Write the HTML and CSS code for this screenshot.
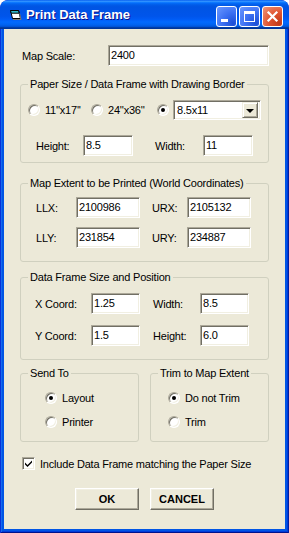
FILE: index.html
```html
<!DOCTYPE html>
<html>
<head>
<meta charset="utf-8">
<link rel="stylesheet" href="styles.css">
</head>
<body>
<div class="window">
  <div class="titlebar">
    <svg class="app-icon" width="13" height="12" viewBox="0 0 13 12">
      <path d="M1.5 1.5 L9.5 1.5 L11.5 9.5 L3.5 9.5 Z" fill="#fff" stroke="#000" stroke-width="1"/>
      <path d="M1.5 1.5 L9.5 1.5 L10.2 4.2 L2.2 4.2 Z" fill="#2fb7c8" stroke="#000" stroke-width="1"/>
      <path d="M4 10.5 L12 10.5 L10.6 4.5" fill="none" stroke="#7a7a7a" stroke-width="1"/>
    </svg>
    <span class="title">Print Data Frame</span>
    <div class="tb-buttons">
      <div class="tb-btn tb-min"><span class="min-glyph"></span></div>
      <div class="tb-btn tb-max"><span class="max-glyph"></span></div>
      <div class="tb-btn tb-close">
        <svg width="13" height="13" viewBox="0 0 13 13"><path d="M2.5 2.5 L10.5 10.5 M10.5 2.5 L2.5 10.5" stroke="#fff" stroke-width="2.2" stroke-linecap="square"/></svg>
      </div>
    </div>
  </div>
  <div class="frame">
    <div class="client">
      <div class="row scale-row">
        <span class="lbl w-scale">Map Scale:</span>
        <div class="input w-scale-in">2400</div>
      </div>

      <div class="group g1">
        <span class="legend">Paper Size / Data Frame with Drawing Border</span>
        <div class="row paper-row">
          <div class="opt opt1"><span class="radio"></span><span class="opt-text">11''x17''</span></div>
          <div class="opt opt2"><span class="radio"></span><span class="opt-text">24''x36''</span></div>
          <span class="radio checked"></span>
          <div class="select">
            <span class="select-text">8.5x11</span>
            <span class="drop-btn"><span class="arrow"></span></span>
          </div>
        </div>
        <div class="row hw-row">
          <span class="lbl w-h">Height:</span>
          <div class="input w50">8.5</div>
          <span class="lbl w-w">Width:</span>
          <div class="input w50">11</div>
        </div>
      </div>

      <div class="group g2">
        <span class="legend">Map Extent to be Printed (World Coordinates)</span>
        <div class="row ext-row r1">
          <span class="lbl w-llx">LLX:</span>
          <div class="input w64">2100986</div>
          <span class="lbl w-urx">URX:</span>
          <div class="input w64">2105132</div>
        </div>
        <div class="row ext-row r2">
          <span class="lbl w-llx">LLY:</span>
          <div class="input w64">231854</div>
          <span class="lbl w-urx">URY:</span>
          <div class="input w64">234887</div>
        </div>
      </div>

      <div class="group g3">
        <span class="legend">Data Frame Size and Position</span>
        <div class="row df-row r1">
          <span class="lbl w-xc">X Coord:</span>
          <div class="input w49">1.25</div>
          <span class="lbl w-dw">Width:</span>
          <div class="input w49">8.5</div>
        </div>
        <div class="row df-row r2">
          <span class="lbl w-xc">Y Coord:</span>
          <div class="input w49">1.5</div>
          <span class="lbl w-dw">Height:</span>
          <div class="input w49">6.0</div>
        </div>
      </div>

      <div class="pair">
        <div class="group g4">
          <span class="legend">Send To</span>
          <div class="row ropt first"><span class="radio checked"></span><span class="opt-text">Layout</span></div>
          <div class="row ropt second"><span class="radio"></span><span class="opt-text">Printer</span></div>
        </div>
        <div class="group g5">
          <span class="legend">Trim to Map Extent</span>
          <div class="row ropt first"><span class="radio checked"></span><span class="opt-text">Do not Trim</span></div>
          <div class="row ropt second"><span class="radio"></span><span class="opt-text">Trim</span></div>
        </div>
      </div>

      <div class="row check-row">
        <span class="checkbox">
          <svg width="9" height="9" viewBox="0 0 9 9"><path d="M1 3.5 L3.5 6 L8 1.5 L8 3.5 L3.5 8 L1 5.5 Z" fill="#000"/></svg>
        </span>
        <span class="opt-text">Include Data Frame matching the Paper Size</span>
      </div>

      <div class="row btn-row">
        <div class="btn">OK</div>
        <div class="btn">CANCEL</div>
      </div>
    </div>
  </div>
</div>
</body>
</html>
```

FILE: styles.css
```css
* { box-sizing: border-box; }
html, body { margin: 0; padding: 0; background: #ffffff; }
body {
  font-family: "Liberation Sans", Arial, sans-serif;
  font-size: 11px;
  letter-spacing: -0.2px;
  color: #000;
}
.window {
  width: 289px;
  height: 533px;
  display: flex;
  flex-direction: column;
  background: #0831d9;
  border-radius: 8px 8px 0 0;
  overflow: hidden;
}
.titlebar {
  height: 29px;
  flex: none;
  display: flex;
  align-items: flex-start;
  padding: 0 6px 0 9px;
  background: linear-gradient(180deg, #0058ee 0%, #3593ff 4%, #288eff 6%, #127dff 8%, #036ffc 10%, #0262ee 14%, #0057e5 20%, #0054e3 24%, #0055eb 56%, #005bf5 66%, #026afe 76%, #0062ef 86%, #0052d6 92%, #0040ab 94%, #003092 100%);
  border-radius: 8px 8px 0 0;
}
.app-icon { margin-top: 9px; flex: none; }
.title {
  margin-left: 4px;
  margin-top: 7px;
  color: #fff;
  font-weight: bold;
  font-size: 13px;
  line-height: 15px;
  letter-spacing: 0;
  text-shadow: 1px 1px #0f1089;
  flex: 1;
}
.tb-buttons { display: flex; gap: 2px; margin-top: 6px; }
.tb-btn {
  width: 21px;
  height: 21px;
  border: 1px solid #fff;
  border-radius: 3px;
  display: flex;
  align-items: center;
  justify-content: center;
  position: relative;
}
.tb-min, .tb-max {
  background: radial-gradient(circle at 85% 85%, #1d4fd6 0%, #3b6ff2 45%, #6a98ff 100%);
}
.tb-close {
  background: radial-gradient(circle at 85% 85%, #c23b1a 0%, #e0532f 45%, #f0977c 100%);
}
.min-glyph {
  width: 7px;
  height: 3px;
  background: #fff;
  margin: 8px 5px 0 0;
}
.max-glyph {
  width: 11px;
  height: 11px;
  border: 1px solid #fff;
  border-top-width: 3px;
}
.frame {
  flex: 1;
  display: flex;
  padding: 0 4px 4px 4px;
  background: #0055e5;
  box-shadow: inset 1px 0 #0831d9, inset -1px 0 #001ea0, inset 0 -1px #00138c, inset 2px 0 #166aee, inset -2px -2px #003bda;
}
.client {
  flex: 1;
  background: #ece9d8;
  padding: 16px 16px 0 16px;
  display: flex;
  flex-direction: column;
}
.row { display: flex; align-items: center; }
.lbl { flex: none; white-space: nowrap; }
.input {
  flex: none;
  height: 21px;
  background: #fff;
  border: 1px solid;
  border-color: #aca899 #fff #fff #aca899;
  box-shadow: inset 1px 1px #716f64, inset -1px -1px #f1efe2;
  padding: 0 0 0 2px;
  line-height: 19px;
  white-space: nowrap;
}
.scale-row { height: 21px; padding-left: 2px; }
.w-scale { width: 86px; }
.w-scale-in { width: 161px; }

.group {
  flex: none;
  border: 1px solid #d0d0bf;
  border-radius: 3px;
  display: flex;
  flex-direction: column;
}
.legend {
  align-self: flex-start;
  margin: -8px 0 0 7px;
  padding: 0 2px 0 2px;
  background: #ece9d8;
  line-height: 14px;
  height: 14px;
  white-space: nowrap;
}
.g1 { margin-top: 18px; height: 79px; }
.paper-row { margin-top: 9px; height: 20px; padding-left: 7px; }
.opt { display: flex; align-items: center; flex: none; }
.opt1 { width: 63px; }
.opt2 { width: 66px; }
.opt-text { margin-left: 5px; white-space: nowrap; }
.radio {
  flex: none;
  width: 12px;
  height: 12px;
  border-radius: 50%;
  background: #fff;
  border: 1px solid;
  border-color: #aca899 #fff #fff #aca899;
  box-shadow: inset 1px 1px #716f64, inset -1px -1px #f1efe2;
  display: flex;
  align-items: center;
  justify-content: center;
}
.radio.checked::after {
  content: "";
  width: 4px;
  height: 4px;
  border-radius: 50%;
  background: #000;
}
.select {
  margin-left: 4px;
  width: 88px;
  height: 20px;
  background: #fff;
  border: 1px solid;
  border-color: #aca899 #fff #fff #aca899;
  box-shadow: inset 1px 1px #716f64, inset -1px -1px #f1efe2;
  display: flex;
  align-items: center;
  padding: 2px 2px 2px 3px;
}
.select-text { flex: 1; line-height: 16px; }
.drop-btn {
  width: 16px;
  height: 16px;
  background: #ece9d8;
  border: 1px solid;
  border-color: #f1efe2 #716f64 #716f64 #f1efe2;
  box-shadow: inset 1px 1px #fff, inset -1px -1px #aca899;
  display: flex;
  align-items: center;
  justify-content: center;
}
.arrow {
  width: 0;
  height: 0;
  border-left: 4px solid transparent;
  border-right: 4px solid transparent;
  border-top: 4px solid #000;
  margin-top: 1px;
}
.hw-row { margin-top: 15px; height: 21px; padding-left: 15px; }
.w-h { width: 47px; }
.w-w { width: 48px; margin-left: 22px; }
.w50 { width: 50px; }

.g2 { margin-top: 20px; height: 79px; }
.ext-row { height: 21px; padding-left: 15px; }
.g2 .r1 { margin-top: 7px; }
.g2 .r2 { margin-top: 9px; }
.w-llx { width: 40px; }
.w-urx { width: 35px; margin-left: 12px; }
.w64 { width: 64px; }

.g3 { margin-top: 15px; height: 83px; }
.df-row { height: 21px; padding-left: 14px; }
.g3 .r1 { margin-top: 9px; }
.g3 .r2 { margin-top: 11px; }
.w-xc { width: 56px; }
.w-dw { width: 47px; margin-left: 13px; }
.w49 { width: 49px; }

.pair { display: flex; gap: 11px; margin-top: 13px; }
.g4, .g5 { width: 119px; height: 69px; }
.ropt { height: 16px; }
.g4 .ropt { padding-left: 24px; }
.g5 .ropt { padding-left: 17px; }
.ropt.first { margin-top: 10px; }
.ropt.second { margin-top: 8px; }

.check-row { margin-top: 15px; height: 13px; padding-left: 2px; }
.checkbox {
  flex: none;
  width: 13px;
  height: 13px;
  background: #fff;
  border: 1px solid;
  border-color: #aca899 #fff #fff #aca899;
  box-shadow: inset 1px 1px #716f64, inset -1px -1px #f1efe2;
  display: flex;
  align-items: center;
  justify-content: center;
}
.check-row .opt-text { margin-left: 5px; }

.btn-row { margin-top: 18px; padding-left: 55px; gap: 11px; }
.btn {
  width: 64px;
  height: 22px;
  background: #ece9d8;
  border: 1px solid;
  border-color: #fff #716f64 #716f64 #fff;
  box-shadow: inset -1px -1px #aca899, inset 1px 1px #f1efe2;
  font-weight: bold;
  letter-spacing: 0;
  display: flex;
  align-items: center;
  justify-content: center;
}
```
